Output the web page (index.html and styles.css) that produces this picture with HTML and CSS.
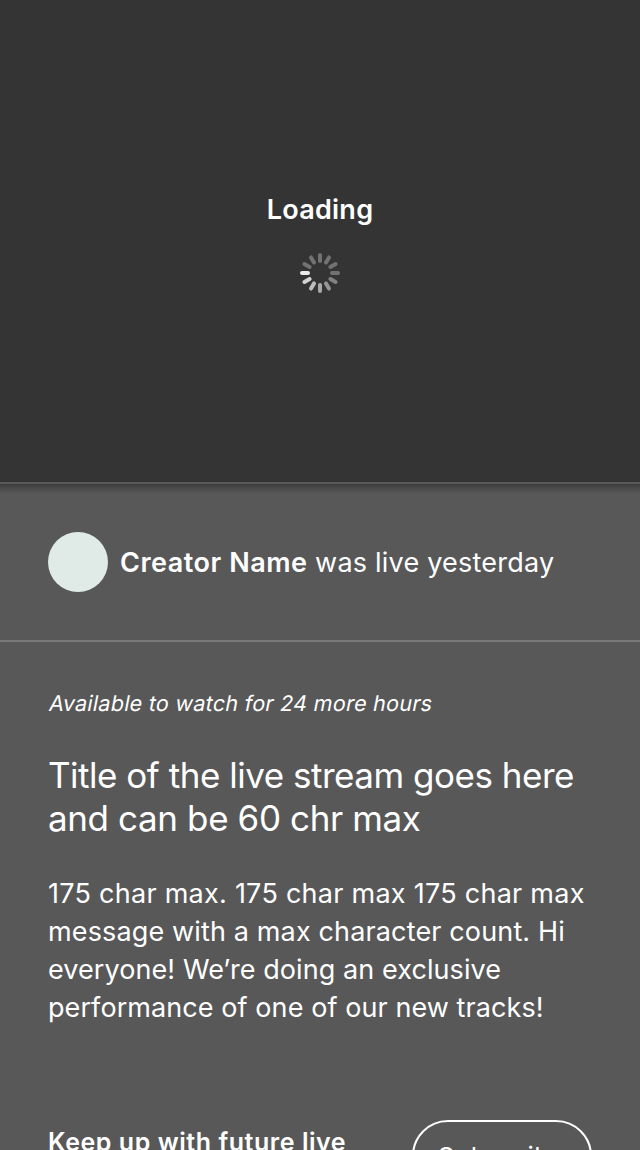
FILE: index.html
```html
<!DOCTYPE html>
<html lang="en">
<head>
<meta charset="utf-8">
<title>Live stream</title>
<link rel="stylesheet" href="styles.css">
</head>
<body>
<main class="screen">
  <section class="player">
    <p class="loading">Loading</p>
    <svg class="spinner" viewBox="-20 -20 40 40" width="40" height="40" stroke-width="4" stroke-linecap="round">
      <path d="M-18 0H-12" stroke="#ebebeb"/>
      <path d="M-18 0H-12" transform="rotate(-30)" stroke="#d2d2d2"/>
      <path d="M-18 0H-12" transform="rotate(-60)" stroke="#bdbdbd"/>
      <path d="M-18 0H-12" transform="rotate(-90)" stroke="#a9a9a9"/>
      <path d="M-18 0H-12" transform="rotate(-120)" stroke="#959595"/>
      <path d="M-18 0H-12" transform="rotate(-150)" stroke="#828282"/>
      <path d="M-18 0H-12" transform="rotate(180)" stroke="#727272"/>
      <path d="M-18 0H-12" transform="rotate(150)" stroke="#727272"/>
      <path d="M-18 0H-12" transform="rotate(120)" stroke="#727272"/>
      <path d="M-18 0H-12" transform="rotate(90)" stroke="#727272"/>
      <path d="M-18 0H-12" transform="rotate(60)" stroke="#727272"/>
      <path d="M-18 0H-12" transform="rotate(30)" stroke="#727272"/>
    </svg>
  </section>
  <header class="creator">
    <div class="avatar"></div>
    <p class="status"><strong class="name">Creator Name</strong> <span class="when">was live yesterday</span></p>
  </header>
  <section class="details">
    <p class="availability">Available to watch for 24 more hours</p>
    <h1 class="title"><span class="t1">Title of the live stream goes here</span><br><span class="t2">and can be 60 chr max</span></h1>
    <p class="message"><span class="m1">175 char max. 175 char max 175 char max</span><br><span class="m2">message with a max character count. Hi</span><br><span class="m3">everyone! We’re doing an exclusive</span><br><span class="m4">performance of one of our new tracks!</span></p>
  </section>
  <footer class="follow">
    <p class="prompt">Keep up with future live</p>
    <button class="subscribe" type="button">Subscribe</button>
  </footer>
</main>
</body>
</html>
```
FILE: styles.css
```css
* { box-sizing: border-box; margin: 0; padding: 0; }
body {
  width: 640px;
  height: 1150px;
  overflow: hidden;
  background: #585858;
  color: #fff;
  font-family: Inter, "Liberation Sans", sans-serif;
  font-kerning: normal;
}
.screen { height: 1150px; overflow: hidden; }
.player {
  height: 484px;
  padding-top: 193px;
  display: flex;
  flex-direction: column;
  align-items: center;
  background: #343434;
  border-bottom: 2px solid #585858;
}
.loading { font-size: 27px; line-height: 34px; font-weight: 600; letter-spacing: 0.25px; }
.spinner { margin-top: 26px; }
.creator {
  height: 158px;
  padding: 48px 48px 0;
  display: flex;
  align-items: flex-start;
  gap: 12px;
  background: linear-gradient(#3b3b3b, #4c4c4c 5px, #585858 10px);
  border-bottom: 2px solid #797979;
}
.avatar { flex: none; width: 60px; height: 60px; border-radius: 50%; background: #e0ebe8; }
.status { padding-top: 1px; font-size: 27px; line-height: 60px; white-space: nowrap; }
.name { font-weight: 600; letter-spacing: 0.52px; }
.when { letter-spacing: 0.22px; }
.details { padding: 44px 48px 0; white-space: nowrap; }
/* Slants the upright face so the two-storey "a" is kept. */
.availability { font-size: 21.5px; line-height: 34px; letter-spacing: 0.28px; transform: skewX(-11deg); transform-origin: 0 75%; }
.title { margin-top: 34px; font-size: 35px; line-height: 43px; font-weight: 400; }
.t1 { letter-spacing: -0.48px; }
.t2 { letter-spacing: -0.38px; }
.message { margin-top: 35px; font-size: 27px; line-height: 38px; }
.m1 { letter-spacing: 0.26px; }
.m2 { letter-spacing: 0.14px; }
.m3, .m4 { letter-spacing: 0.08px; }
.follow { display: flex; justify-content: space-between; padding: 93px 48px 0; }
.prompt { padding-top: 5px; font-size: 25px; line-height: 34px; font-weight: 600; letter-spacing: 0.55px; }
.subscribe {
  width: 180px;
  height: 72px;
  border: 2px solid #fff;
  border-radius: 36px;
  background: transparent;
  color: #fff;
  font: 400 26px Inter, sans-serif;
  letter-spacing: 0.5px;
}
```
